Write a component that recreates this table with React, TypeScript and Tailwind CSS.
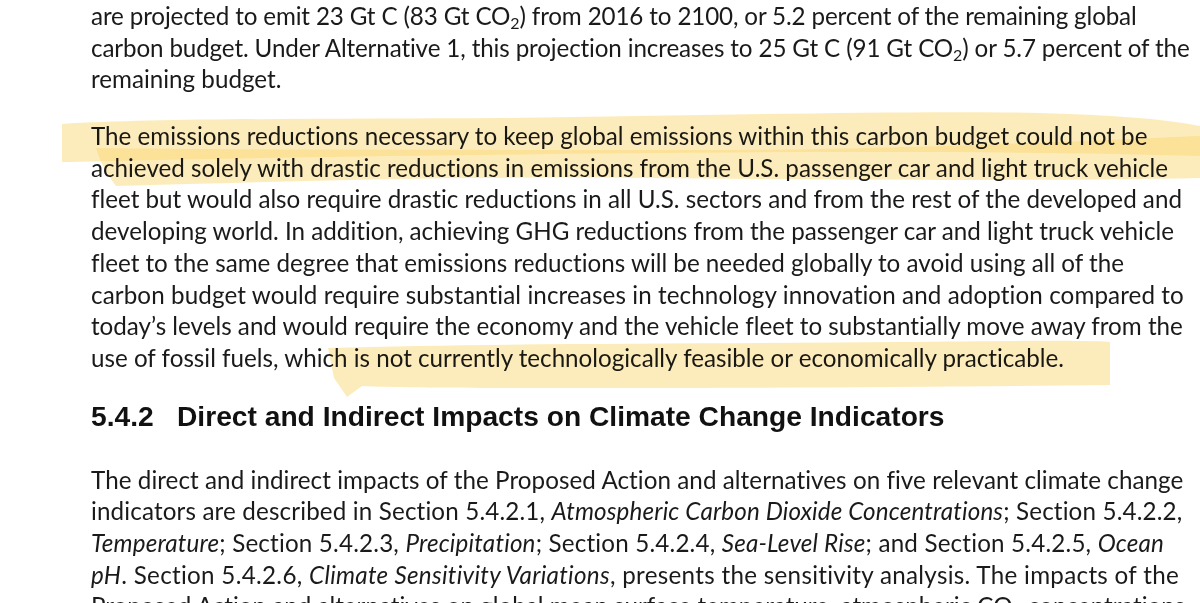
const body = "font-['Lato','Noto_Sans',sans-serif] text-[24.2px] text-[#1a1a1a] [font-variant-ligatures:none]";

function Line({ children, className = "" }: { children: React.ReactNode; className?: string }) {
  return <div className={`h-[31.7px] leading-[31.7px] whitespace-nowrap ${className}`}>{children}</div>;
}

function Sub({ children }: { children: React.ReactNode }) {
  return <span className="relative top-[0.28em] text-[0.66em]">{children}</span>;
}

function Highlights() {
  return (
    <svg
      className="pointer-events-none absolute inset-0 mix-blend-multiply"
      width="1200"
      height="603"
      viewBox="0 0 1200 603"
    >
      <g fill="#fbd977" fillOpacity="0.5">
        <path d="M62 124 C 160 118, 330 119, 500 118 C 700 116, 900 110, 1040 113 C 1120 115, 1170 120, 1200 126 L 1200 156 C 1000 150, 700 152, 480 155 C 300 157, 150 160, 62 162 Z" />
        <path d="M96 148 C 250 150, 500 150, 700 150 C 900 150, 1100 140, 1200 136 L 1200 178 C 1050 181, 850 180, 650 178 C 450 176, 300 181, 116 186 C 108 176, 100 162, 96 148 Z" />
        <path d="M328 348 C 500 343, 700 344, 900 342 C 1000 341, 1080 340, 1110 342 L 1110 385 C 950 387, 800 388, 600 388 C 480 388, 400 388, 362 386 L 347 397 L 334 378 Z" />
      </g>
    </svg>
  );
}

export default function App() {
  return (
    <div className="relative h-[603px] w-[1200px] overflow-hidden bg-white">
      <div className={`${body} pl-[91px]`}>
        <div>
          <Line className="tracking-[-0.14px]">are projected to emit 23 Gt C (83 Gt CO<Sub>2</Sub>) from 2016 to 2100, or 5.2 percent of the remaining global</Line>
          <Line className="tracking-[-0.13px]">carbon budget. Under Alternative 1, this projection increases to 25 Gt C (91 Gt CO<Sub>2</Sub>) or 5.7 percent of the</Line>
          <Line>remaining budget.</Line>
        </div>
        <div className="mt-[25px]">
          <Line>The emissions reductions necessary to keep global emissions within this carbon budget could not be</Line>
          <Line>achieved solely with drastic reductions in emissions from the U.S. passenger car and light truck vehicle</Line>
          <Line>fleet but would also require drastic reductions in all U.S. sectors and from the rest of the developed and</Line>
          <Line>developing world. In addition, achieving GHG reductions from the passenger car and light truck vehicle</Line>
          <Line>fleet to the same degree that emissions reductions will be needed globally to avoid using all of the</Line>
          <Line className="tracking-[0.1px]">carbon budget would require substantial increases in technology innovation and adoption compared to</Line>
          <Line>today’s levels and would require the economy and the vehicle fleet to substantially move away from the</Line>
          <Line>use of fossil fuels, which is not currently technologically feasible or economically practicable.</Line>
        </div>
        <h2 className="mt-[25px] flex h-[36px] items-center font-['Liberation_Sans',Arial,sans-serif] text-[28.2px] font-bold text-[#111]">
          <span className="w-[86px]">5.4.2</span>
          <span>Direct and Indirect Impacts on Climate Change Indicators</span>
        </h2>
        <div className="mt-[29px]">
          <Line className="tracking-[0.06px]">The direct and indirect impacts of the Proposed Action and alternatives on five relevant climate change</Line>
          <Line className="tracking-[0.15px]">indicators are described in Section 5.4.2.1, <i>Atmospheric Carbon Dioxide Concentrations</i>; Section 5.4.2.2,</Line>
          <Line className="tracking-[0.18px]"><i>Temperature</i>; Section 5.4.2.3, <i>Precipitation</i>; Section 5.4.2.4, <i>Sea-Level Rise</i>; and Section 5.4.2.5, <i>Ocean</i></Line>
          <Line className="tracking-[0.3px]"><i>pH</i>. Section 5.4.2.6, <i>Climate Sensitivity Variations</i>, presents the sensitivity analysis. The impacts of the</Line>
          <Line>Proposed Action and alternatives on global mean surface temperature, atmospheric CO<Sub>2</Sub> concentrations</Line>
        </div>
      </div>
      <Highlights />
    </div>
  );
}
